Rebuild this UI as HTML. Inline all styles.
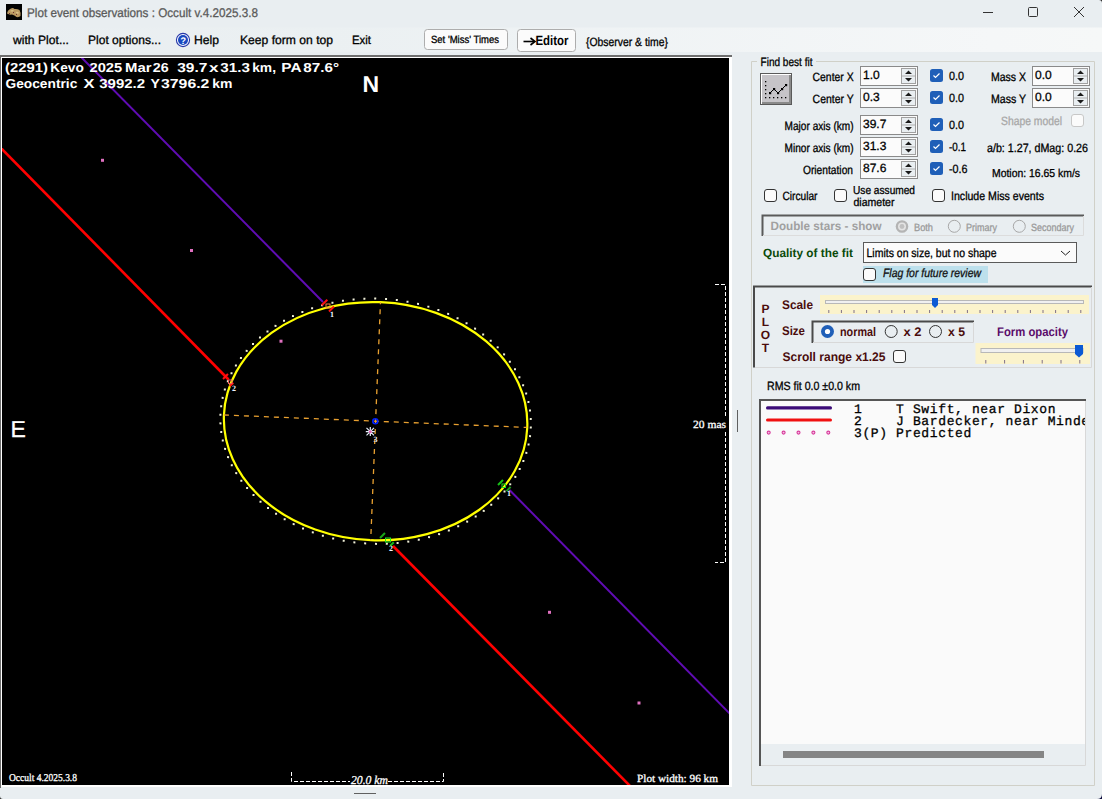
<!DOCTYPE html>
<html><head><meta charset="utf-8"><title>Plot event observations</title>
<style>html,body{margin:0;padding:0;background:#e9eef1;overflow:hidden} svg{display:block}</style></head>
<body><svg width="1102" height="799" viewBox="0 0 1102 799" text-rendering="geometricPrecision">
<rect x="0" y="0" width="1102" height="799" fill="#e9eef1"/>
<defs><linearGradient id="mg" x1="0" y1="0" x2="1" y2="0"><stop offset="0" stop-color="#e9eef1"/><stop offset="0.3" stop-color="#ebf0f2"/><stop offset="0.9" stop-color="#f5f7f8"/><stop offset="1" stop-color="#f6f8f8"/></linearGradient></defs>
<rect x="0" y="27.5" width="1102" height="24.5" fill="url(#mg)"/>
<rect x="6" y="4" width="16" height="16" fill="#020202"/>
<path d="M7 13.5 Q7.5 10 11 8.5 Q13 7.5 14.5 9 Q17 8.5 19.5 10 Q21 12.5 20.5 16 Q19 17.5 16.5 17 Q14.5 15 12 14.5 Q9 15 7 13.5Z" fill="#b89860"/>
<path d="M10 11 Q12 9.5 14 10.5 Q13 12.5 10 11Z M15.5 12 Q18 11 19 13 Q17.5 15 15.5 12Z" fill="#d8c088"/>
<g fill="#6a3030"><rect x="13" y="12" width="1" height="1"/><rect x="16" y="14" width="1" height="1"/><rect x="9" y="13" width="1" height="1"/></g>
<text x="27" y="17" font-family='"Liberation Sans", sans-serif' font-size="12.5" fill="#5a5a5a" stroke="#5a5a5a" stroke-width="0.3" font-weight="normal" font-style="normal" text-anchor="start" textLength="231" lengthAdjust="spacingAndGlyphs"  xml:space="preserve">Plot event observations : Occult v.4.2025.3.8</text>
<line x1="983" y1="12.5" x2="993" y2="12.5" stroke="#333" stroke-width="1"/>
<rect x="1028.5" y="7.5" width="9" height="9" rx="1" fill="none" stroke="#333" stroke-width="1"/>
<path d="M1074 7 L1084 17 M1084 7 L1074 17" stroke="#333" stroke-width="1"/>
<text x="13" y="44" font-family='"Liberation Sans", sans-serif' font-size="12" fill="#000" stroke="#000" stroke-width="0.3" font-weight="normal" font-style="normal" text-anchor="start" textLength="56" lengthAdjust="spacingAndGlyphs"  xml:space="preserve">with Plot...</text>
<text x="88" y="44" font-family='"Liberation Sans", sans-serif' font-size="12" fill="#000" stroke="#000" stroke-width="0.3" font-weight="normal" font-style="normal" text-anchor="start" textLength="73" lengthAdjust="spacingAndGlyphs"  xml:space="preserve">Plot options...</text>
<circle cx="183" cy="40" r="6.6" fill="#f4f6ff" stroke="#2838a8" stroke-width="1.1"/><circle cx="183" cy="40" r="5" fill="#1848c0"/>
<text x="183.2" y="43.8" font-family='"Liberation Sans", sans-serif' font-size="9.5" fill="#fff" stroke="#fff" stroke-width="0" font-weight="bold" font-style="normal" text-anchor="middle"  xml:space="preserve">?</text>
<text x="194" y="44" font-family='"Liberation Sans", sans-serif' font-size="12" fill="#000" stroke="#000" stroke-width="0.3" font-weight="normal" font-style="normal" text-anchor="start" textLength="25" lengthAdjust="spacingAndGlyphs"  xml:space="preserve">Help</text>
<text x="240" y="44" font-family='"Liberation Sans", sans-serif' font-size="12" fill="#000" stroke="#000" stroke-width="0.3" font-weight="normal" font-style="normal" text-anchor="start" textLength="93" lengthAdjust="spacingAndGlyphs"  xml:space="preserve">Keep form on top</text>
<text x="352" y="44" font-family='"Liberation Sans", sans-serif' font-size="12" fill="#000" stroke="#000" stroke-width="0.3" font-weight="normal" font-style="normal" text-anchor="start" textLength="19" lengthAdjust="spacingAndGlyphs"  xml:space="preserve">Exit</text>
<rect x="424.5" y="29.5" width="83" height="20" rx="3" fill="#fbfbfb" stroke="#adadad"/>
<text x="431" y="43" font-family='"Liberation Sans", sans-serif' font-size="10.5" fill="#000" stroke="#000" stroke-width="0.3" font-weight="normal" font-style="normal" text-anchor="start" textLength="68" lengthAdjust="spacingAndGlyphs"  xml:space="preserve">Set 'Miss' Times</text>
<rect x="517.5" y="29.5" width="58" height="22" rx="3" fill="#fbfbfb" stroke="#adadad"/>
<path d="M523.5 41.5 L534 41.5" stroke="#000" stroke-width="1.6"/><path d="M530.5 38 L535 41.5 L530.5 45" stroke="#000" stroke-width="1.6" fill="none"/>
<text x="535.5" y="44.8" font-family='"Liberation Sans", sans-serif' font-size="13.5" fill="#000" stroke="#000" stroke-width="0" font-weight="bold" font-style="normal" text-anchor="start" textLength="33" lengthAdjust="spacingAndGlyphs"  xml:space="preserve">Editor</text>
<text x="586" y="45.5" font-family='"Liberation Sans", sans-serif' font-size="12" fill="#000" stroke="#000" stroke-width="0.3" font-weight="normal" font-style="normal" text-anchor="start" textLength="82" lengthAdjust="spacingAndGlyphs"  xml:space="preserve">{Observer &amp; time}</text>
<rect x="0" y="55" width="732" height="2" fill="#6e6e6e"/>
<rect x="0" y="55" width="1" height="733" fill="#6e6e6e"/>
<rect x="1" y="57" width="731" height="730" fill="#ffffff"/>
<rect x="2" y="58" width="727" height="727" fill="#000"/>
<svg x="2" y="58" width="727" height="727" overflow="hidden"><g transform="translate(-2,-58)">
<line x1="80" y1="56" x2="323" y2="302" stroke="#600cb4" stroke-width="2"/>
<line x1="509.5" y1="490" x2="740" y2="724" stroke="#600cb4" stroke-width="2"/>
<line x1="0" y1="147" x2="228.5" y2="379.5" stroke="#ff0000" stroke-width="2.6"/>
<line x1="393" y1="546" x2="634" y2="790" stroke="#ff0000" stroke-width="2.6"/>
<g transform="translate(375.6,421.2) rotate(2.35)">
<ellipse cx="0" cy="0" rx="151.8" ry="119.1" fill="none" stroke="#ffff00" stroke-width="2.2"/>
<line x1="-151.8" y1="0" x2="151.8" y2="0" stroke="#e8a030" stroke-width="1.3" stroke-dasharray="5 5"/>
<line x1="0" y1="-119.1" x2="0" y2="119.1" stroke="#e8a030" stroke-width="1.3" stroke-dasharray="5 5" stroke-dashoffset="3"/>
<g fill="#f0f0d8"><rect x="154.30" y="-1.00" width="2" height="2"/><rect x="153.92" y="7.55" width="2" height="2"/><rect x="152.79" y="16.06" width="2" height="2"/><rect x="150.91" y="24.49" width="2" height="2"/><rect x="148.28" y="32.79" width="2" height="2"/><rect x="144.93" y="40.93" width="2" height="2"/><rect x="140.87" y="48.87" width="2" height="2"/><rect x="136.12" y="56.56" width="2" height="2"/><rect x="130.70" y="63.97" width="2" height="2"/><rect x="124.64" y="71.06" width="2" height="2"/><rect x="117.97" y="77.81" width="2" height="2"/><rect x="110.71" y="84.17" width="2" height="2"/><rect x="102.92" y="90.11" width="2" height="2"/><rect x="94.61" y="95.61" width="2" height="2"/><rect x="85.84" y="100.64" width="2" height="2"/><rect x="76.65" y="105.17" width="2" height="2"/><rect x="67.08" y="109.19" width="2" height="2"/><rect x="57.18" y="112.67" width="2" height="2"/><rect x="46.99" y="115.60" width="2" height="2"/><rect x="36.57" y="117.96" width="2" height="2"/><rect x="25.97" y="119.74" width="2" height="2"/><rect x="15.23" y="120.93" width="2" height="2"/><rect x="4.42" y="121.53" width="2" height="2"/><rect x="-6.42" y="121.53" width="2" height="2"/><rect x="-17.23" y="120.93" width="2" height="2"/><rect x="-27.97" y="119.74" width="2" height="2"/><rect x="-38.57" y="117.96" width="2" height="2"/><rect x="-48.99" y="115.60" width="2" height="2"/><rect x="-59.18" y="112.67" width="2" height="2"/><rect x="-69.08" y="109.19" width="2" height="2"/><rect x="-78.65" y="105.17" width="2" height="2"/><rect x="-87.84" y="100.64" width="2" height="2"/><rect x="-96.61" y="95.61" width="2" height="2"/><rect x="-104.92" y="90.11" width="2" height="2"/><rect x="-112.71" y="84.17" width="2" height="2"/><rect x="-119.97" y="77.81" width="2" height="2"/><rect x="-126.64" y="71.06" width="2" height="2"/><rect x="-132.70" y="63.97" width="2" height="2"/><rect x="-138.12" y="56.56" width="2" height="2"/><rect x="-142.87" y="48.87" width="2" height="2"/><rect x="-146.93" y="40.93" width="2" height="2"/><rect x="-150.28" y="32.79" width="2" height="2"/><rect x="-152.91" y="24.49" width="2" height="2"/><rect x="-154.79" y="16.06" width="2" height="2"/><rect x="-155.92" y="7.55" width="2" height="2"/><rect x="-156.30" y="-1.00" width="2" height="2"/><rect x="-155.92" y="-9.55" width="2" height="2"/><rect x="-154.79" y="-18.06" width="2" height="2"/><rect x="-152.91" y="-26.49" width="2" height="2"/><rect x="-150.28" y="-34.79" width="2" height="2"/><rect x="-146.93" y="-42.93" width="2" height="2"/><rect x="-142.87" y="-50.87" width="2" height="2"/><rect x="-138.12" y="-58.56" width="2" height="2"/><rect x="-132.70" y="-65.97" width="2" height="2"/><rect x="-126.64" y="-73.06" width="2" height="2"/><rect x="-119.97" y="-79.81" width="2" height="2"/><rect x="-112.71" y="-86.17" width="2" height="2"/><rect x="-104.92" y="-92.11" width="2" height="2"/><rect x="-96.61" y="-97.61" width="2" height="2"/><rect x="-87.84" y="-102.64" width="2" height="2"/><rect x="-78.65" y="-107.17" width="2" height="2"/><rect x="-69.08" y="-111.19" width="2" height="2"/><rect x="-59.18" y="-114.67" width="2" height="2"/><rect x="-48.99" y="-117.60" width="2" height="2"/><rect x="-38.57" y="-119.96" width="2" height="2"/><rect x="-27.97" y="-121.74" width="2" height="2"/><rect x="-17.23" y="-122.93" width="2" height="2"/><rect x="-6.42" y="-123.53" width="2" height="2"/><rect x="4.42" y="-123.53" width="2" height="2"/><rect x="15.23" y="-122.93" width="2" height="2"/><rect x="25.97" y="-121.74" width="2" height="2"/><rect x="36.57" y="-119.96" width="2" height="2"/><rect x="46.99" y="-117.60" width="2" height="2"/><rect x="57.18" y="-114.67" width="2" height="2"/><rect x="67.08" y="-111.19" width="2" height="2"/><rect x="76.65" y="-107.17" width="2" height="2"/><rect x="85.84" y="-102.64" width="2" height="2"/><rect x="94.61" y="-97.61" width="2" height="2"/><rect x="102.92" y="-92.11" width="2" height="2"/><rect x="110.71" y="-86.17" width="2" height="2"/><rect x="117.97" y="-79.81" width="2" height="2"/><rect x="124.64" y="-73.06" width="2" height="2"/><rect x="130.70" y="-65.97" width="2" height="2"/><rect x="136.12" y="-58.56" width="2" height="2"/><rect x="140.87" y="-50.87" width="2" height="2"/><rect x="144.93" y="-42.93" width="2" height="2"/><rect x="148.28" y="-34.79" width="2" height="2"/><rect x="150.91" y="-26.49" width="2" height="2"/><rect x="152.79" y="-18.06" width="2" height="2"/><rect x="153.92" y="-9.55" width="2" height="2"/></g>
</g>
<circle cx="375.3" cy="421.2" r="2.5" fill="none" stroke="#0020ff" stroke-width="1.6"/>
<g stroke="#e8f0ff" stroke-width="1.2"><path d="M366.5 427.8 L374 435.3 M374 427.8 L366.5 435.3 M370.3 427 L370.3 436 M365.8 431.6 L374.8 431.6"/></g>
<circle cx="370.3" cy="431.7" r="1.5" fill="#e060b0"/>
<line x1="321.67" y1="305.33" x2="327.33" y2="299.67" stroke="#ff1010" stroke-width="2"/>
<line x1="329.02" y1="311.48" x2="333.98" y2="306.52" stroke="#ff1010" stroke-width="2"/>
<rect x="326" y="304" width="4" height="4" fill="none" stroke="#f08040" stroke-width="1"/>
<line x1="223.02" y1="378.98" x2="227.98" y2="374.02" stroke="#ff1010" stroke-width="2"/>
<line x1="229.73" y1="386.27" x2="233.27" y2="382.73" stroke="#ff1010" stroke-width="2"/>
<rect x="228.5" y="380" width="3.5" height="3.5" fill="none" stroke="#f06060" stroke-width="1"/>
<line x1="498.02" y1="484.98" x2="502.98" y2="480.02" stroke="#18c018" stroke-width="2"/>
<line x1="506.38" y1="491.12" x2="510.62" y2="486.88" stroke="#18a018" stroke-width="2"/>
<rect x="502" y="484" width="3.5" height="3.5" fill="none" stroke="#20e020" stroke-width="1"/>
<line x1="380.02" y1="537.98" x2="384.98" y2="533.02" stroke="#18a818" stroke-width="2"/>
<line x1="390.23" y1="545.77" x2="393.77" y2="542.23" stroke="#18c018" stroke-width="2"/>
<rect x="385.5" y="538" width="5" height="4" fill="none" stroke="#20f020" stroke-width="1"/>
<text x="330" y="317" font-family='"Liberation Serif", serif' font-size="8" fill="#f0f4ff" stroke="#f0f4ff" stroke-width="0" font-weight="bold" font-style="normal" text-anchor="start"  xml:space="preserve">1</text>
<text x="232" y="391" font-family='"Liberation Serif", serif' font-size="8" fill="#f0f4ff" stroke="#f0f4ff" stroke-width="0" font-weight="bold" font-style="normal" text-anchor="start"  xml:space="preserve">2</text>
<text x="507" y="495.5" font-family='"Liberation Serif", serif' font-size="8" fill="#f0f4ff" stroke="#f0f4ff" stroke-width="0" font-weight="bold" font-style="normal" text-anchor="start"  xml:space="preserve">1</text>
<text x="389" y="551" font-family='"Liberation Serif", serif' font-size="8" fill="#f0f4ff" stroke="#f0f4ff" stroke-width="0" font-weight="bold" font-style="normal" text-anchor="start"  xml:space="preserve">2</text>
<text x="373.5" y="442" font-family='"Liberation Serif", serif' font-size="8" fill="#f0f4ff" stroke="#f0f4ff" stroke-width="0" font-weight="bold" font-style="normal" text-anchor="start"  xml:space="preserve">3</text>
<rect x="101.0" y="158.8" width="3" height="3" fill="#e070c0"/>
<rect x="190.0" y="249.0" width="3" height="3" fill="#e070c0"/>
<rect x="279.5" y="339.7" width="3" height="3" fill="#e070c0"/>
<rect x="548.0" y="610.8" width="3" height="3" fill="#e070c0"/>
<rect x="637.5" y="701.5" width="3" height="3" fill="#e070c0"/>
<text x="5.0" y="71.5" font-family='"Liberation Sans", sans-serif' font-size="13" fill="#fff" stroke="#fff" stroke-width="0" font-weight="bold" font-style="normal" text-anchor="start" textLength="42.9" lengthAdjust="spacingAndGlyphs"  xml:space="preserve">(2291)</text>
<text x="50.3" y="71.5" font-family='"Liberation Sans", sans-serif' font-size="13" fill="#fff" stroke="#fff" stroke-width="0" font-weight="bold" font-style="normal" text-anchor="start" textLength="33.5" lengthAdjust="spacingAndGlyphs"  xml:space="preserve">Kevo</text>
<text x="89.5" y="71.5" font-family='"Liberation Sans", sans-serif' font-size="13" fill="#fff" stroke="#fff" stroke-width="0" font-weight="bold" font-style="normal" text-anchor="start" textLength="32.7" lengthAdjust="spacingAndGlyphs"  xml:space="preserve">2025</text>
<text x="125.1" y="71.5" font-family='"Liberation Sans", sans-serif' font-size="13" fill="#fff" stroke="#fff" stroke-width="0" font-weight="bold" font-style="normal" text-anchor="start" textLength="26.5" lengthAdjust="spacingAndGlyphs"  xml:space="preserve">Mar</text>
<text x="152.8" y="71.5" font-family='"Liberation Sans", sans-serif' font-size="13" fill="#fff" stroke="#fff" stroke-width="0" font-weight="bold" font-style="normal" text-anchor="start" textLength="15.9" lengthAdjust="spacingAndGlyphs"  xml:space="preserve">26</text>
<text x="177.2" y="71.5" font-family='"Liberation Sans", sans-serif' font-size="13" fill="#fff" stroke="#fff" stroke-width="0" font-weight="bold" font-style="normal" text-anchor="start" textLength="30.1" lengthAdjust="spacingAndGlyphs"  xml:space="preserve">39.7</text>
<text x="209.0" y="71.5" font-family='"Liberation Sans", sans-serif' font-size="13" fill="#fff" stroke="#fff" stroke-width="0" font-weight="bold" font-style="normal" text-anchor="start" textLength="9.5" lengthAdjust="spacingAndGlyphs"  xml:space="preserve">x</text>
<text x="220.3" y="71.5" font-family='"Liberation Sans", sans-serif' font-size="13" fill="#fff" stroke="#fff" stroke-width="0" font-weight="bold" font-style="normal" text-anchor="start" textLength="29.6" lengthAdjust="spacingAndGlyphs"  xml:space="preserve">31.3</text>
<text x="252.2" y="71.5" font-family='"Liberation Sans", sans-serif' font-size="13" fill="#fff" stroke="#fff" stroke-width="0" font-weight="bold" font-style="normal" text-anchor="start" textLength="23.8" lengthAdjust="spacingAndGlyphs"  xml:space="preserve">km,</text>
<text x="281.3" y="71.5" font-family='"Liberation Sans", sans-serif' font-size="13" fill="#fff" stroke="#fff" stroke-width="0" font-weight="bold" font-style="normal" text-anchor="start" textLength="20.2" lengthAdjust="spacingAndGlyphs"  xml:space="preserve">PA</text>
<text x="303.3" y="71.5" font-family='"Liberation Sans", sans-serif' font-size="13" fill="#fff" stroke="#fff" stroke-width="0" font-weight="bold" font-style="normal" text-anchor="start" textLength="35.7" lengthAdjust="spacingAndGlyphs"  xml:space="preserve">87.6°</text>
<text x="5.5" y="87.5" font-family='"Liberation Sans", sans-serif' font-size="13" fill="#fff" stroke="#fff" stroke-width="0" font-weight="bold" font-style="normal" text-anchor="start" textLength="71.8" lengthAdjust="spacingAndGlyphs"  xml:space="preserve">Geocentric</text>
<text x="83.4" y="87.5" font-family='"Liberation Sans", sans-serif' font-size="13" fill="#fff" stroke="#fff" stroke-width="0" font-weight="bold" font-style="normal" text-anchor="start" textLength="11.0" lengthAdjust="spacingAndGlyphs"  xml:space="preserve">X</text>
<text x="99.3" y="87.5" font-family='"Liberation Sans", sans-serif' font-size="13" fill="#fff" stroke="#fff" stroke-width="0" font-weight="bold" font-style="normal" text-anchor="start" textLength="45.8" lengthAdjust="spacingAndGlyphs"  xml:space="preserve">3992.2</text>
<text x="150.4" y="87.5" font-family='"Liberation Sans", sans-serif' font-size="13" fill="#fff" stroke="#fff" stroke-width="0" font-weight="bold" font-style="normal" text-anchor="start" textLength="9.4" lengthAdjust="spacingAndGlyphs"  xml:space="preserve">Y</text>
<text x="161.0" y="87.5" font-family='"Liberation Sans", sans-serif' font-size="13" fill="#fff" stroke="#fff" stroke-width="0" font-weight="bold" font-style="normal" text-anchor="start" textLength="48.4" lengthAdjust="spacingAndGlyphs"  xml:space="preserve">3796.2</text>
<text x="212.2" y="87.5" font-family='"Liberation Sans", sans-serif' font-size="13" fill="#fff" stroke="#fff" stroke-width="0" font-weight="bold" font-style="normal" text-anchor="start" textLength="20.2" lengthAdjust="spacingAndGlyphs"  xml:space="preserve">km</text>
<text x="362.5" y="91.8" font-family='"Liberation Sans", sans-serif' font-size="23" fill="#fff" stroke="#fff" stroke-width="0" font-weight="bold" font-style="normal" text-anchor="start"  xml:space="preserve">N</text>
<text x="10.5" y="436.8" font-family='"Liberation Sans", sans-serif' font-size="23" fill="#fff" stroke="#fff" stroke-width="0.3" font-weight="normal" font-style="normal" text-anchor="start"  xml:space="preserve">E</text>
<path d="M291.5 772 L291.5 781.5 L350 781.5 M388 781.5 L443.5 781.5 L443.5 772" fill="none" stroke="#fff" stroke-width="1" stroke-dasharray="4 2"/>
<text x="351" y="784" font-family='"Liberation Serif", serif' font-size="12" fill="#fff" stroke="#fff" stroke-width="0.3" font-weight="normal" font-style="italic" text-anchor="start" textLength="37" lengthAdjust="spacingAndGlyphs"  xml:space="preserve">20.0 km</text>
<text x="9" y="781" font-family='"Liberation Serif", serif' font-size="10.5" fill="#fff" stroke="#fff" stroke-width="0.3" font-weight="normal" font-style="normal" text-anchor="start" textLength="68" lengthAdjust="spacingAndGlyphs"  xml:space="preserve">Occult 4.2025.3.8</text>
<text x="637" y="782" font-family='"Liberation Serif", serif' font-size="11" fill="#fff" stroke="#fff" stroke-width="0.3" font-weight="normal" font-style="normal" text-anchor="start" textLength="81" lengthAdjust="spacingAndGlyphs"  xml:space="preserve">Plot width: 96 km</text>
<path d="M715 284.5 L725.5 284.5 L725.5 416.5 M725.5 432 L725.5 562.5 L715 562.5" fill="none" stroke="#fff" stroke-width="1" stroke-dasharray="4 2"/>
<text x="693" y="427.7" font-family='"Liberation Serif", serif' font-size="11" fill="#fff" stroke="#fff" stroke-width="0.3" font-weight="normal" font-style="normal" text-anchor="start" textLength="33" lengthAdjust="spacingAndGlyphs"  xml:space="preserve">20 mas</text>
</g></svg>
<rect x="737" y="410" width="1" height="22" fill="#606060"/>
<rect x="354" y="793" width="22" height="1" fill="#606060"/>
<path d="M757 61.5 L751.5 61.5 L751.5 785.5 L1094.5 785.5 L1094.5 61.5 L816 61.5" fill="none" stroke="#d0d0c8" stroke-width="1"/>
<text x="760.5" y="65.8" font-family='"Liberation Sans", sans-serif' font-size="12" fill="#000" stroke="#000" stroke-width="0.3" font-weight="normal" font-style="normal" text-anchor="start" textLength="52" lengthAdjust="spacingAndGlyphs"  xml:space="preserve">Find best fit</text>
<rect x="760" y="73" width="32" height="32" fill="#5a5a5a"/>
<rect x="761" y="74" width="30" height="30" fill="#ffffff"/>
<rect x="762" y="75" width="29" height="29" fill="#8a8a8a"/>
<rect x="762" y="75" width="27" height="27" fill="#c6c4c8"/>
<path d="M770 93 L774 89 L778 93 L782 89 L786 85" stroke="#000" stroke-width="1" fill="none"/>
<g fill="#000"><rect x="769" y="92" width="2.2" height="2.2"/><rect x="773" y="88" width="2.2" height="2.2"/><rect x="777" y="92" width="2.2" height="2.2"/><rect x="781" y="88" width="2.2" height="2.2"/><rect x="785" y="84" width="2.2" height="2.2"/></g>
<g fill="#000"><rect x="765" y="97" width="1.3" height="1.3"/><rect x="769" y="97" width="1.3" height="1.3"/><rect x="773" y="97" width="1.3" height="1.3"/><rect x="777" y="97" width="1.3" height="1.3"/><rect x="781" y="97" width="1.3" height="1.3"/><rect x="785" y="97" width="1.3" height="1.3"/><rect x="765" y="81" width="1.3" height="1.3"/><rect x="765" y="85" width="1.3" height="1.3"/><rect x="765" y="89" width="1.3" height="1.3"/><rect x="765" y="93" width="1.3" height="1.3"/></g>
<text x="853.6" y="81" font-family='"Liberation Sans", sans-serif' font-size="12" fill="#000" stroke="#000" stroke-width="0.3" font-weight="normal" font-style="normal" text-anchor="end" textLength="41" lengthAdjust="spacingAndGlyphs"  xml:space="preserve">Center X</text>
<rect x="860.5" y="66.5" width="57" height="19" fill="#fbfbfb" stroke="#8a8a8a"/>
<rect x="901.5" y="68.5" width="14" height="15" fill="#e9eef1" stroke="#a0a0a0"/>
<line x1="902" y1="76.0" x2="915" y2="76.0" stroke="#b0b0b0"/>
<path d="M905.0 74 L912.0 74 L908.5 70.5Z M905.0 78 L912.0 78 L908.5 81.5Z" fill="#1a1a1a"/>
<text x="863" y="79" font-family='"Liberation Sans", sans-serif' font-size="12" fill="#000" stroke="#000" stroke-width="0.3" font-weight="normal" font-style="normal" text-anchor="start"  xml:space="preserve">1.0</text>
<text x="853.6" y="103" font-family='"Liberation Sans", sans-serif' font-size="12" fill="#000" stroke="#000" stroke-width="0.3" font-weight="normal" font-style="normal" text-anchor="end" textLength="41" lengthAdjust="spacingAndGlyphs"  xml:space="preserve">Center Y</text>
<rect x="860.5" y="88.5" width="57" height="19" fill="#fbfbfb" stroke="#8a8a8a"/>
<rect x="901.5" y="90.5" width="14" height="15" fill="#e9eef1" stroke="#a0a0a0"/>
<line x1="902" y1="98.0" x2="915" y2="98.0" stroke="#b0b0b0"/>
<path d="M905.0 96 L912.0 96 L908.5 92.5Z M905.0 100 L912.0 100 L908.5 103.5Z" fill="#1a1a1a"/>
<text x="863" y="101" font-family='"Liberation Sans", sans-serif' font-size="12" fill="#000" stroke="#000" stroke-width="0.3" font-weight="normal" font-style="normal" text-anchor="start"  xml:space="preserve">0.3</text>
<rect x="930" y="69" width="13" height="13" rx="2.5" fill="#1f5fb8"/>
<path d="M933.5 75.5 L935.5 77.5 L939.5 73.5" stroke="#fff" stroke-width="1.2" fill="none"/>
<text x="949" y="80" font-family='"Liberation Sans", sans-serif' font-size="12" fill="#000" stroke="#000" stroke-width="0.3" font-weight="normal" font-style="normal" text-anchor="start" textLength="15" lengthAdjust="spacingAndGlyphs"  xml:space="preserve">0.0</text>
<rect x="930" y="91" width="13" height="13" rx="2.5" fill="#1f5fb8"/>
<path d="M933.5 97.5 L935.5 99.5 L939.5 95.5" stroke="#fff" stroke-width="1.2" fill="none"/>
<text x="949" y="102" font-family='"Liberation Sans", sans-serif' font-size="12" fill="#000" stroke="#000" stroke-width="0.3" font-weight="normal" font-style="normal" text-anchor="start" textLength="15" lengthAdjust="spacingAndGlyphs"  xml:space="preserve">0.0</text>
<text x="1026" y="81" font-family='"Liberation Sans", sans-serif' font-size="12" fill="#000" stroke="#000" stroke-width="0.3" font-weight="normal" font-style="normal" text-anchor="end" textLength="35" lengthAdjust="spacingAndGlyphs"  xml:space="preserve">Mass X</text>
<rect x="1032.5" y="66.5" width="57" height="19" fill="#fbfbfb" stroke="#8a8a8a"/>
<rect x="1073.5" y="68.5" width="14" height="15" fill="#e9eef1" stroke="#a0a0a0"/>
<line x1="1074" y1="76.0" x2="1087" y2="76.0" stroke="#b0b0b0"/>
<path d="M1077.0 74 L1084.0 74 L1080.5 70.5Z M1077.0 78 L1084.0 78 L1080.5 81.5Z" fill="#1a1a1a"/>
<text x="1035" y="79" font-family='"Liberation Sans", sans-serif' font-size="12" fill="#000" stroke="#000" stroke-width="0.3" font-weight="normal" font-style="normal" text-anchor="start"  xml:space="preserve">0.0</text>
<text x="1026" y="103" font-family='"Liberation Sans", sans-serif' font-size="12" fill="#000" stroke="#000" stroke-width="0.3" font-weight="normal" font-style="normal" text-anchor="end" textLength="35" lengthAdjust="spacingAndGlyphs"  xml:space="preserve">Mass Y</text>
<rect x="1032.5" y="88.5" width="57" height="19" fill="#fbfbfb" stroke="#8a8a8a"/>
<rect x="1073.5" y="90.5" width="14" height="15" fill="#e9eef1" stroke="#a0a0a0"/>
<line x1="1074" y1="98.0" x2="1087" y2="98.0" stroke="#b0b0b0"/>
<path d="M1077.0 96 L1084.0 96 L1080.5 92.5Z M1077.0 100 L1084.0 100 L1080.5 103.5Z" fill="#1a1a1a"/>
<text x="1035" y="101" font-family='"Liberation Sans", sans-serif' font-size="12" fill="#000" stroke="#000" stroke-width="0.3" font-weight="normal" font-style="normal" text-anchor="start"  xml:space="preserve">0.0</text>
<text x="1062" y="125" font-family='"Liberation Sans", sans-serif' font-size="12" fill="#a8a8a8" stroke="#a8a8a8" stroke-width="0.3" font-weight="normal" font-style="normal" text-anchor="end" textLength="61" lengthAdjust="spacingAndGlyphs"  xml:space="preserve">Shape model</text>
<rect x="1071.5" y="114.5" width="12" height="12" rx="2.5" fill="#fbfbfb" stroke="#c8c8c8"/>
<text x="853.6" y="130" font-family='"Liberation Sans", sans-serif' font-size="12" fill="#000" stroke="#000" stroke-width="0.3" font-weight="normal" font-style="normal" text-anchor="end" textLength="69" lengthAdjust="spacingAndGlyphs"  xml:space="preserve">Major axis (km)</text>
<rect x="860.5" y="115.5" width="57" height="19" fill="#fbfbfb" stroke="#8a8a8a"/>
<rect x="901.5" y="117.5" width="14" height="15" fill="#e9eef1" stroke="#a0a0a0"/>
<line x1="902" y1="125.0" x2="915" y2="125.0" stroke="#b0b0b0"/>
<path d="M905.0 123 L912.0 123 L908.5 119.5Z M905.0 127 L912.0 127 L908.5 130.5Z" fill="#1a1a1a"/>
<text x="863" y="128" font-family='"Liberation Sans", sans-serif' font-size="12" fill="#000" stroke="#000" stroke-width="0.3" font-weight="normal" font-style="normal" text-anchor="start"  xml:space="preserve">39.7</text>
<text x="853.6" y="152" font-family='"Liberation Sans", sans-serif' font-size="12" fill="#000" stroke="#000" stroke-width="0.3" font-weight="normal" font-style="normal" text-anchor="end" textLength="69" lengthAdjust="spacingAndGlyphs"  xml:space="preserve">Minor axis (km)</text>
<rect x="860.5" y="137.5" width="57" height="19" fill="#fbfbfb" stroke="#8a8a8a"/>
<rect x="901.5" y="139.5" width="14" height="15" fill="#e9eef1" stroke="#a0a0a0"/>
<line x1="902" y1="147.0" x2="915" y2="147.0" stroke="#b0b0b0"/>
<path d="M905.0 145 L912.0 145 L908.5 141.5Z M905.0 149 L912.0 149 L908.5 152.5Z" fill="#1a1a1a"/>
<text x="863" y="150" font-family='"Liberation Sans", sans-serif' font-size="12" fill="#000" stroke="#000" stroke-width="0.3" font-weight="normal" font-style="normal" text-anchor="start"  xml:space="preserve">31.3</text>
<text x="853" y="174" font-family='"Liberation Sans", sans-serif' font-size="12" fill="#000" stroke="#000" stroke-width="0.3" font-weight="normal" font-style="normal" text-anchor="end" textLength="50" lengthAdjust="spacingAndGlyphs"  xml:space="preserve">Orientation</text>
<rect x="860.5" y="159.5" width="57" height="19" fill="#fbfbfb" stroke="#8a8a8a"/>
<rect x="901.5" y="161.5" width="14" height="15" fill="#e9eef1" stroke="#a0a0a0"/>
<line x1="902" y1="169.0" x2="915" y2="169.0" stroke="#b0b0b0"/>
<path d="M905.0 167 L912.0 167 L908.5 163.5Z M905.0 171 L912.0 171 L908.5 174.5Z" fill="#1a1a1a"/>
<text x="863" y="172" font-family='"Liberation Sans", sans-serif' font-size="12" fill="#000" stroke="#000" stroke-width="0.3" font-weight="normal" font-style="normal" text-anchor="start"  xml:space="preserve">87.6</text>
<rect x="930" y="118" width="13" height="13" rx="2.5" fill="#1f5fb8"/>
<path d="M933.5 124.5 L935.5 126.5 L939.5 122.5" stroke="#fff" stroke-width="1.2" fill="none"/>
<text x="949" y="129" font-family='"Liberation Sans", sans-serif' font-size="12" fill="#000" stroke="#000" stroke-width="0.3" font-weight="normal" font-style="normal" text-anchor="start" textLength="15" lengthAdjust="spacingAndGlyphs"  xml:space="preserve">0.0</text>
<rect x="930" y="140" width="13" height="13" rx="2.5" fill="#1f5fb8"/>
<path d="M933.5 146.5 L935.5 148.5 L939.5 144.5" stroke="#fff" stroke-width="1.2" fill="none"/>
<text x="949" y="151" font-family='"Liberation Sans", sans-serif' font-size="12" fill="#000" stroke="#000" stroke-width="0.3" font-weight="normal" font-style="normal" text-anchor="start" textLength="17" lengthAdjust="spacingAndGlyphs"  xml:space="preserve">-0.1</text>
<rect x="930" y="162" width="13" height="13" rx="2.5" fill="#1f5fb8"/>
<path d="M933.5 168.5 L935.5 170.5 L939.5 166.5" stroke="#fff" stroke-width="1.2" fill="none"/>
<text x="949" y="173" font-family='"Liberation Sans", sans-serif' font-size="12" fill="#000" stroke="#000" stroke-width="0.3" font-weight="normal" font-style="normal" text-anchor="start" textLength="18.5" lengthAdjust="spacingAndGlyphs"  xml:space="preserve">-0.6</text>
<text x="987" y="152" font-family='"Liberation Sans", sans-serif' font-size="12" fill="#000" stroke="#000" stroke-width="0.3" font-weight="normal" font-style="normal" text-anchor="start" textLength="101" lengthAdjust="spacingAndGlyphs"  xml:space="preserve">a/b: 1.27, dMag: 0.26</text>
<text x="992" y="176.5" font-family='"Liberation Sans", sans-serif' font-size="11.5" fill="#000" stroke="#000" stroke-width="0.3" font-weight="normal" font-style="normal" text-anchor="start" textLength="88" lengthAdjust="spacingAndGlyphs"  xml:space="preserve">Motion: 16.65 km/s</text>
<rect x="764.5" y="189.5" width="12" height="12" rx="2.5" fill="#fbfbfb" stroke="#333"/>
<text x="782.5" y="199.5" font-family='"Liberation Sans", sans-serif' font-size="12" fill="#000" stroke="#000" stroke-width="0.3" font-weight="normal" font-style="normal" text-anchor="start" textLength="35" lengthAdjust="spacingAndGlyphs"  xml:space="preserve">Circular</text>
<rect x="834.5" y="189.5" width="12" height="12" rx="2.5" fill="#fbfbfb" stroke="#333"/>
<text x="853" y="194" font-family='"Liberation Sans", sans-serif' font-size="11.5" fill="#000" stroke="#000" stroke-width="0.3" font-weight="normal" font-style="normal" text-anchor="start" textLength="62" lengthAdjust="spacingAndGlyphs"  xml:space="preserve">Use assumed</text>
<text x="853.5" y="206.3" font-family='"Liberation Sans", sans-serif' font-size="11.5" fill="#000" stroke="#000" stroke-width="0.3" font-weight="normal" font-style="normal" text-anchor="start" textLength="41" lengthAdjust="spacingAndGlyphs"  xml:space="preserve">diameter</text>
<rect x="932.5" y="189.5" width="12" height="12" rx="2.5" fill="#fbfbfb" stroke="#333"/>
<text x="951" y="199.5" font-family='"Liberation Sans", sans-serif' font-size="12" fill="#000" stroke="#000" stroke-width="0.3" font-weight="normal" font-style="normal" text-anchor="start" textLength="93" lengthAdjust="spacingAndGlyphs"  xml:space="preserve">Include Miss events</text>
<rect x="762" y="215" width="322" height="21" fill="#e9eef1"/>
<path d="M762.5 236 L762.5 215.5 L1084 215.5" stroke="#5a5a5a" stroke-width="2" fill="none"/>
<path d="M763 235.5 L1083.5 235.5 L1083.5 216" stroke="#dcdcdc" stroke-width="1" fill="none"/>
<text x="770.5" y="230" font-family='"Liberation Sans", sans-serif' font-size="12" fill="#a0a0a0" stroke="#a0a0a0" stroke-width="0" font-weight="bold" font-style="normal" text-anchor="start" textLength="111" lengthAdjust="spacingAndGlyphs"  xml:space="preserve">Double stars - show</text>
<circle cx="902" cy="226.5" r="6.3" fill="#b4b4b4"/><circle cx="902" cy="226.5" r="4" fill="#e4e4e4"/><circle cx="902" cy="226.5" r="2.4" fill="#c0c0c0"/>
<text x="914" y="231" font-family='"Liberation Sans", sans-serif' font-size="10.5" fill="#9a9a9a" stroke="#9a9a9a" stroke-width="0.3" font-weight="normal" font-style="normal" text-anchor="start" textLength="19" lengthAdjust="spacingAndGlyphs"  xml:space="preserve">Both</text>
<circle cx="954.3" cy="226.3" r="6" fill="none" stroke="#a8a8a8" stroke-width="1"/>
<text x="966" y="231" font-family='"Liberation Sans", sans-serif' font-size="10.5" fill="#9a9a9a" stroke="#9a9a9a" stroke-width="0.3" font-weight="normal" font-style="normal" text-anchor="start" textLength="31" lengthAdjust="spacingAndGlyphs"  xml:space="preserve">Primary</text>
<circle cx="1019.3" cy="226.3" r="6" fill="none" stroke="#a8a8a8" stroke-width="1"/>
<text x="1031" y="231" font-family='"Liberation Sans", sans-serif' font-size="10.5" fill="#9a9a9a" stroke="#9a9a9a" stroke-width="0.3" font-weight="normal" font-style="normal" text-anchor="start" textLength="43" lengthAdjust="spacingAndGlyphs"  xml:space="preserve">Secondary</text>
<text x="763" y="257" font-family='"Liberation Sans", sans-serif' font-size="12" fill="#0a4a0a" stroke="#0a4a0a" stroke-width="0" font-weight="bold" font-style="normal" text-anchor="start" textLength="90" lengthAdjust="spacingAndGlyphs"  xml:space="preserve">Quality of the fit</text>
<rect x="863.5" y="242.5" width="213" height="20" fill="#fbfbfb" stroke="#5a5a5a"/>
<text x="866.5" y="256.5" font-family='"Liberation Sans", sans-serif' font-size="12" fill="#000" stroke="#000" stroke-width="0.3" font-weight="normal" font-style="normal" text-anchor="start" textLength="130" lengthAdjust="spacingAndGlyphs"  xml:space="preserve">Limits on size, but no shape</text>
<path d="M1061 251 L1065.5 255 L1070 251" stroke="#222" stroke-width="1" fill="none"/>
<rect x="863" y="266" width="125" height="17" fill="#bde0ec"/>
<rect x="863.5" y="268.5" width="12" height="12" rx="2.5" fill="#fbfbfb" stroke="#333"/>
<text x="883" y="277" font-family='"Liberation Sans", sans-serif' font-size="12" fill="#111" stroke="#111" stroke-width="0.3" font-weight="normal" font-style="italic" text-anchor="start" textLength="98" lengthAdjust="spacingAndGlyphs"  xml:space="preserve">Flag for future review</text>
<path d="M754 367.5 L754 286.5 L1092 286.5" stroke="#4a4a4a" stroke-width="2" fill="none"/>
<path d="M755 367.5 L1091.5 367.5 L1091.5 287" stroke="#d8d8d8" stroke-width="1" fill="none"/>
<text x="765.5" y="312.8" font-family='"Liberation Sans", sans-serif' font-size="12" fill="#4a0c0c" stroke="#4a0c0c" stroke-width="0" font-weight="bold" font-style="normal" text-anchor="middle"  xml:space="preserve">P</text>
<text x="765.5" y="325.90000000000003" font-family='"Liberation Sans", sans-serif' font-size="12" fill="#4a0c0c" stroke="#4a0c0c" stroke-width="0" font-weight="bold" font-style="normal" text-anchor="middle"  xml:space="preserve">L</text>
<text x="765.5" y="339.0" font-family='"Liberation Sans", sans-serif' font-size="12" fill="#4a0c0c" stroke="#4a0c0c" stroke-width="0" font-weight="bold" font-style="normal" text-anchor="middle"  xml:space="preserve">O</text>
<text x="765.5" y="352.1" font-family='"Liberation Sans", sans-serif' font-size="12" fill="#4a0c0c" stroke="#4a0c0c" stroke-width="0" font-weight="bold" font-style="normal" text-anchor="middle"  xml:space="preserve">T</text>
<text x="782" y="309" font-family='"Liberation Sans", sans-serif' font-size="12.5" fill="#4a0c0c" stroke="#4a0c0c" stroke-width="0" font-weight="bold" font-style="normal" text-anchor="start" textLength="31" lengthAdjust="spacingAndGlyphs"  xml:space="preserve">Scale</text>
<rect x="820" y="295" width="269" height="19" fill="#fbf3cc"/>
<rect x="825.5" y="300.5" width="258" height="3" fill="#f0f0f0" stroke="#b8b8b8"/>
<path d="M932 298 L938 298 L938 305 L935 308 L932 305Z" fill="#0c5ad4"/>
<g fill="#807088"><rect x="828.3" y="310" width="1" height="3"/><rect x="840.9" y="310" width="1" height="3"/><rect x="853.5" y="310" width="1" height="3"/><rect x="866.1" y="310" width="1" height="3"/><rect x="878.7" y="310" width="1" height="3"/><rect x="891.3" y="310" width="1" height="3"/><rect x="903.9" y="310" width="1" height="3"/><rect x="916.5" y="310" width="1" height="3"/><rect x="929.1" y="310" width="1" height="3"/><rect x="941.7" y="310" width="1" height="3"/><rect x="954.3" y="310" width="1" height="3"/><rect x="966.9" y="310" width="1" height="3"/><rect x="979.5" y="310" width="1" height="3"/><rect x="992.1" y="310" width="1" height="3"/><rect x="1004.7" y="310" width="1" height="3"/><rect x="1017.3" y="310" width="1" height="3"/><rect x="1029.9" y="310" width="1" height="3"/><rect x="1042.5" y="310" width="1" height="3"/><rect x="1055.1" y="310" width="1" height="3"/><rect x="1067.7" y="310" width="1" height="3"/><rect x="1080.3" y="310" width="1" height="3"/></g>
<text x="782" y="334.7" font-family='"Liberation Sans", sans-serif' font-size="12.5" fill="#4a0c0c" stroke="#4a0c0c" stroke-width="0" font-weight="bold" font-style="normal" text-anchor="start" textLength="23" lengthAdjust="spacingAndGlyphs"  xml:space="preserve">Size</text>
<rect x="812" y="321" width="162" height="22" fill="#e9eef1"/>
<path d="M812.5 343 L812.5 321.5 L974 321.5" stroke="#4a4a4a" stroke-width="2" fill="none"/>
<path d="M813 342.5 L973.5 342.5 L973.5 322" stroke="#d8d8d8" stroke-width="1" fill="none"/>
<circle cx="827.5" cy="331.5" r="6.5" fill="#1f5fb8"/><circle cx="827.5" cy="331.5" r="2.6" fill="#fff"/>
<text x="840" y="335.5" font-family='"Liberation Sans", sans-serif' font-size="12.5" fill="#4a0c0c" stroke="#4a0c0c" stroke-width="0" font-weight="bold" font-style="normal" text-anchor="start" textLength="36" lengthAdjust="spacingAndGlyphs"  xml:space="preserve">normal</text>
<circle cx="891.2" cy="331.5" r="6" fill="none" stroke="#333" stroke-width="1"/>
<text x="903.5" y="335.5" font-family='"Liberation Sans", sans-serif' font-size="12.5" fill="#4a0c0c" stroke="#4a0c0c" stroke-width="0" font-weight="bold" font-style="normal" text-anchor="start" textLength="18" lengthAdjust="spacingAndGlyphs"  xml:space="preserve">x 2</text>
<circle cx="935.5" cy="331.5" r="6" fill="none" stroke="#333" stroke-width="1"/>
<text x="948" y="335.5" font-family='"Liberation Sans", sans-serif' font-size="12.5" fill="#4a0c0c" stroke="#4a0c0c" stroke-width="0" font-weight="bold" font-style="normal" text-anchor="start" textLength="17" lengthAdjust="spacingAndGlyphs"  xml:space="preserve">x 5</text>
<text x="997" y="335.5" font-family='"Liberation Sans", sans-serif' font-size="12.5" fill="#5a0c6a" stroke="#5a0c6a" stroke-width="0" font-weight="bold" font-style="normal" text-anchor="start" textLength="71" lengthAdjust="spacingAndGlyphs"  xml:space="preserve">Form opacity</text>
<text x="782.5" y="360.5" font-family='"Liberation Sans", sans-serif' font-size="12.5" fill="#4a0c0c" stroke="#4a0c0c" stroke-width="0" font-weight="bold" font-style="normal" text-anchor="start" textLength="103" lengthAdjust="spacingAndGlyphs"  xml:space="preserve">Scroll range x1.25</text>
<rect x="893.5" y="350.5" width="12" height="12" rx="2.5" fill="#fbfbfb" stroke="#333"/>
<rect x="975.5" y="343" width="114.5" height="21" fill="#fbf3cc"/>
<rect x="981" y="348.5" width="102" height="4" fill="#f0f0f0" stroke="#b8b8b8"/>
<path d="M1075 345 L1083 345 L1083 354 L1079 357.5 L1075 354Z" fill="#0c5ad4"/>
<g fill="#807088"><rect x="985.3" y="360" width="1" height="3.5"/><rect x="1004.1" y="360" width="1" height="3.5"/><rect x="1022.9" y="360" width="1" height="3.5"/><rect x="1041.7" y="360" width="1" height="3.5"/><rect x="1060.5" y="360" width="1" height="3.5"/><rect x="1079.3" y="360" width="1" height="3.5"/></g>
<text x="767" y="390" font-family='"Liberation Sans", sans-serif' font-size="12" fill="#000" stroke="#000" stroke-width="0.3" font-weight="normal" font-style="normal" text-anchor="start" textLength="93" lengthAdjust="spacingAndGlyphs"  xml:space="preserve">RMS fit 0.0 ±0.0 km</text>
<rect x="759" y="399" width="327" height="367" fill="#e9eef1"/>
<rect x="761" y="401" width="324" height="343" fill="#fafafa"/>
<path d="M760 766 L760 400 L1086 400" stroke="#555" stroke-width="2" fill="none"/>
<path d="M761 765.5 L1085.5 765.5 L1085.5 401" stroke="#d8d8d8" stroke-width="1" fill="none"/>
<rect x="766" y="406.3" width="66" height="3.2" rx="1.5" fill="#3c0c78"/>
<rect x="766" y="418.5" width="66" height="3" rx="1.5" fill="#f01010"/>
<circle cx="768.7" cy="432.6" r="1.5" fill="#f4c0e4" stroke="#d83c9c" stroke-width="1.1"/>
<circle cx="783.6" cy="432.6" r="1.5" fill="#f4c0e4" stroke="#d83c9c" stroke-width="1.1"/>
<circle cx="798.5" cy="432.6" r="1.5" fill="#f4c0e4" stroke="#d83c9c" stroke-width="1.1"/>
<circle cx="813.4" cy="432.6" r="1.5" fill="#f4c0e4" stroke="#d83c9c" stroke-width="1.1"/>
<circle cx="828.3" cy="432.6" r="1.5" fill="#f4c0e4" stroke="#d83c9c" stroke-width="1.1"/>
<svg x="761" y="401" width="324" height="343" overflow="hidden"><g transform="translate(-761,-401)">
<text x="854" y="412.9" font-family='"Liberation Mono", monospace' font-size="13" fill="#000" stroke="#000" stroke-width="0.3" font-weight="normal" font-style="normal" text-anchor="start" letter-spacing="0.62" xml:space="preserve">1    T Swift, near Dixon</text>
<text x="854" y="424.7" font-family='"Liberation Mono", monospace' font-size="13" fill="#000" stroke="#000" stroke-width="0.3" font-weight="normal" font-style="normal" text-anchor="start" letter-spacing="0.62" xml:space="preserve">2    J Bardecker, near Minde</text>
<text x="854" y="436.5" font-family='"Liberation Mono", monospace' font-size="13" fill="#000" stroke="#000" stroke-width="0.3" font-weight="normal" font-style="normal" text-anchor="start" letter-spacing="0.62" xml:space="preserve">3(P) Predicted</text>
</g></svg>
<rect x="783" y="751" width="261" height="7" fill="#858585"/>
<path d="M1097 799 Q1102 799 1102 794 L1102 799Z" fill="#101040"/>
<path d="M1099 0 Q1102 0 1102 3 L1102 0Z" fill="#202020"/>
<path d="M0 796 Q0 799 3 799 L0 799Z" fill="#303030"/>
</svg></body></html>
